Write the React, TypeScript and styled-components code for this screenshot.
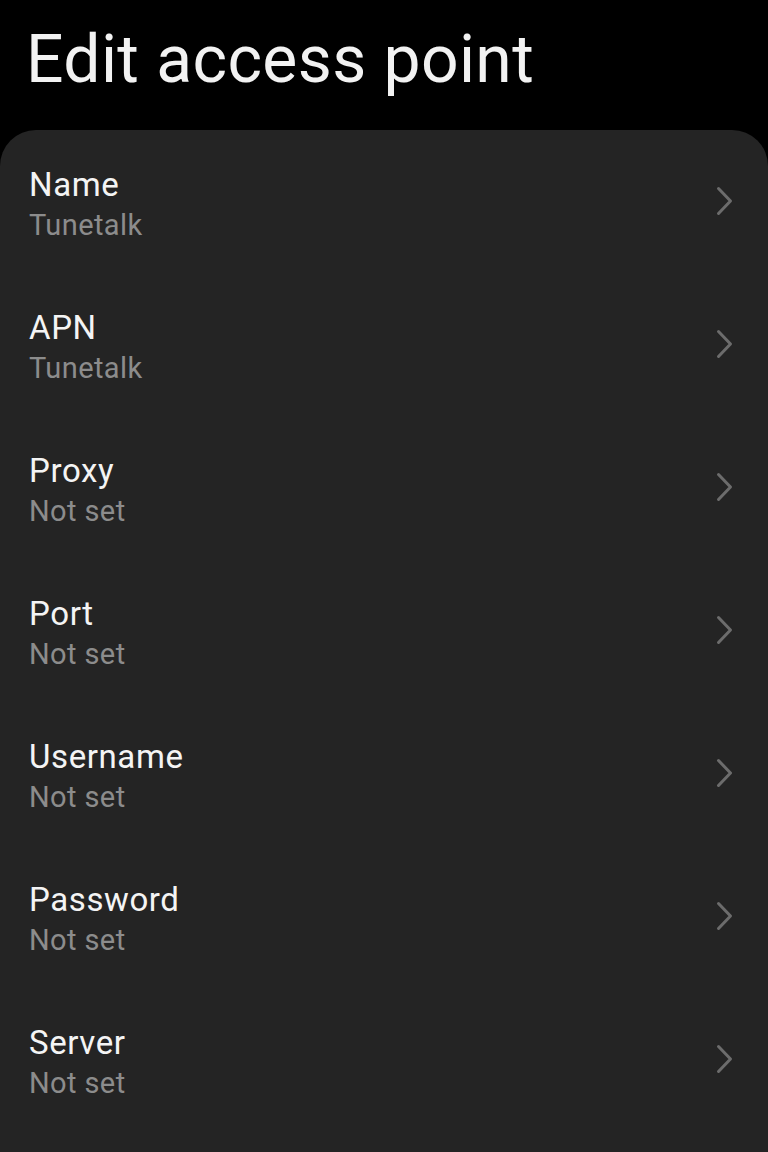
import React from "react";
import styled, { createGlobalStyle } from "styled-components";

const Global = createGlobalStyle`
  html, body {
    margin: 0;
    padding: 0;
    background: #000;
  }
  body {
    font-family: Roboto, "Noto Sans", sans-serif;
    -webkit-font-smoothing: antialiased;
  }
`;

const Screen = styled.div`
  width: 768px;
  height: 1152px;
  overflow: hidden;
  background: #000;
  display: flex;
  flex-direction: column;
`;

const Header = styled.h1`
  margin: 0;
  flex-shrink: 0;
  height: 130px;
  padding: 20px 0 0 26px;
  box-sizing: border-box;
  font-size: 66px;
  font-weight: 400;
  line-height: 80px;
  color: #f2f2f2;
  letter-spacing: 0.4px;
`;

const Card = styled.div`
  flex: 1;
  background: #242424;
  border-radius: 36px 36px 0 0;
  padding-top: 2px;
  display: flex;
  flex-direction: column;
`;

const Row = styled.div`
  height: 143px;
  flex-shrink: 0;
  display: flex;
  align-items: center;
  padding: 0 34px 0 29px;
`;

const Texts = styled.div`
  flex: 1;
  display: flex;
  flex-direction: column;
`;

const Title = styled.div`
  font-size: 33px;
  line-height: 42px;
  color: #f4f4f4;
  letter-spacing: 0.6px;
`;

const Value = styled.div`
  font-size: 29px;
  line-height: 38px;
  color: #8c8c8c;
  letter-spacing: 0.4px;
`;

const Arrow = styled.svg`
  flex-shrink: 0;
  margin-bottom: 6px;
`;

const Chevron = () => (
  <Arrow width="18" height="30" viewBox="0 0 18 30" fill="none">
    <path d="M2.5 2.5 L14.5 15 L2.5 27.5" stroke="#6c6c6c" strokeWidth="3" strokeLinecap="round" strokeLinejoin="round" />
  </Arrow>
);

const items = [
  ["Name", "Tunetalk"],
  ["APN", "Tunetalk"],
  ["Proxy", "Not set"],
  ["Port", "Not set"],
  ["Username", "Not set"],
  ["Password", "Not set"],
  ["Server", "Not set"],
];

export default function App() {
  return (
    <Screen>
      <Global />
      <Header>Edit access point</Header>
      <Card>
        {items.map(([t, v]) => (
          <Row key={t}>
            <Texts>
              <Title>{t}</Title>
              <Value>{v}</Value>
            </Texts>
            <Chevron />
          </Row>
        ))}
      </Card>
    </Screen>
  );
}
